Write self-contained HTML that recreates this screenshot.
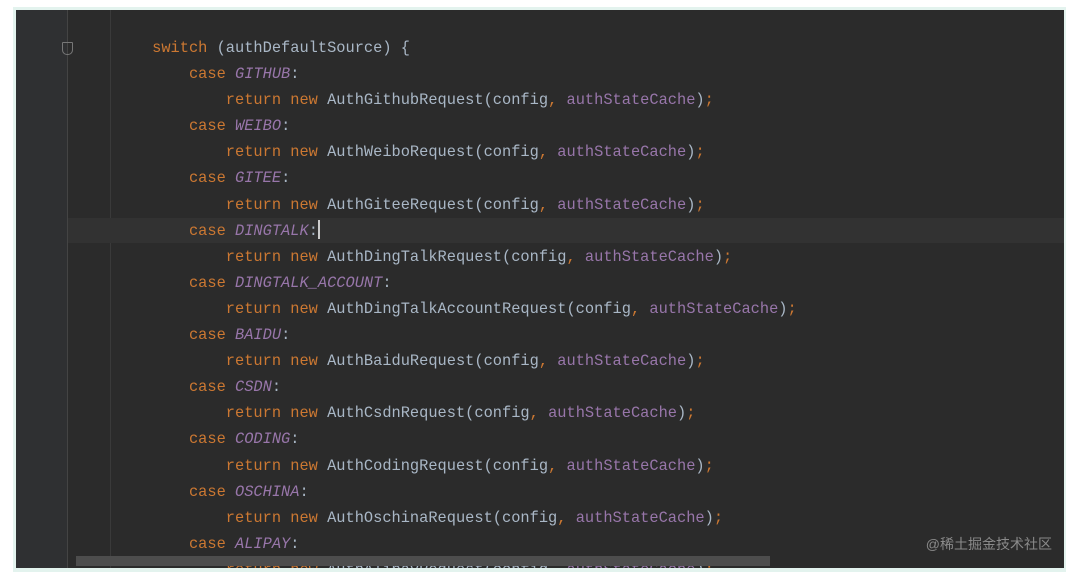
<!DOCTYPE html>
<html><head><style>
body{margin:0;width:1072px;height:579px;background:#fff;position:relative;overflow:hidden;font-family:"Liberation Mono",monospace}
.frame{position:absolute;left:13px;top:7px;width:1053px;height:565px;background:#e3f3ee}
.ed{position:absolute;left:16px;top:10px;width:1048px;height:558px;background:#2b2b2b;overflow:hidden}
.gut{position:absolute;left:0;top:0;width:51px;height:100%;background:#2f3032}
.vl{position:absolute;top:0;width:1px;height:100%;background:#3a3a3a}
.hl{position:absolute;left:52px;top:208px;width:996px;height:25px;background:#323232}
.code{position:absolute;left:-2px;top:25px;font-size:15.35px;line-height:26.1px;color:#a9b7c6;white-space:pre}
.k{color:#cc7832}.c{color:#9876aa;font-style:italic}.f{color:#9876aa}
.caret{display:inline-block;width:2px;height:19px;background:#ccc;vertical-align:-4px}
.sb{position:absolute;left:60px;top:546px;width:694px;height:10px;background:#4d4d4d}
.wm{position:absolute;right:20px;top:534px;color:#8a8a8a;font:14px "Liberation Sans","Noto Sans CJK SC",sans-serif}
.fold{position:absolute;left:46px;top:32px;width:9px;height:11px;border:1px solid #777;border-radius:1px 1px 5px 5px}
</style></head><body>
<div class="frame"></div>
<div class="ed">
<div class="gut"></div>
<div class="vl" style="left:51px;background:#444"></div>
<div class="vl" style="left:94px"></div>
<div class="hl"></div>
<div class="fold"></div>
<div class="code">               <span class="k">switch</span> (authDefaultSource) {
                   <span class="k">case</span> <span class="c">GITHUB</span>:
                       <span class="k">return new</span> AuthGithubRequest(config<span class="k">,</span> <span class="f">authStateCache</span>)<span class="k">;</span>
                   <span class="k">case</span> <span class="c">WEIBO</span>:
                       <span class="k">return new</span> AuthWeiboRequest(config<span class="k">,</span> <span class="f">authStateCache</span>)<span class="k">;</span>
                   <span class="k">case</span> <span class="c">GITEE</span>:
                       <span class="k">return new</span> AuthGiteeRequest(config<span class="k">,</span> <span class="f">authStateCache</span>)<span class="k">;</span>
                   <span class="k">case</span> <span class="c">DINGTALK</span>:<span class="caret"></span>
                       <span class="k">return new</span> AuthDingTalkRequest(config<span class="k">,</span> <span class="f">authStateCache</span>)<span class="k">;</span>
                   <span class="k">case</span> <span class="c">DINGTALK_ACCOUNT</span>:
                       <span class="k">return new</span> AuthDingTalkAccountRequest(config<span class="k">,</span> <span class="f">authStateCache</span>)<span class="k">;</span>
                   <span class="k">case</span> <span class="c">BAIDU</span>:
                       <span class="k">return new</span> AuthBaiduRequest(config<span class="k">,</span> <span class="f">authStateCache</span>)<span class="k">;</span>
                   <span class="k">case</span> <span class="c">CSDN</span>:
                       <span class="k">return new</span> AuthCsdnRequest(config<span class="k">,</span> <span class="f">authStateCache</span>)<span class="k">;</span>
                   <span class="k">case</span> <span class="c">CODING</span>:
                       <span class="k">return new</span> AuthCodingRequest(config<span class="k">,</span> <span class="f">authStateCache</span>)<span class="k">;</span>
                   <span class="k">case</span> <span class="c">OSCHINA</span>:
                       <span class="k">return new</span> AuthOschinaRequest(config<span class="k">,</span> <span class="f">authStateCache</span>)<span class="k">;</span>
                   <span class="k">case</span> <span class="c">ALIPAY</span>:
                       <span class="k">return new</span> AuthAlipayRequest(config<span class="k">,</span> <span class="f">authStateCache</span>)<span class="k">;</span></div>
<div class="sb"></div>
</div>
<div class="wm">@稀土掘金技术社区</div>
</body></html>
